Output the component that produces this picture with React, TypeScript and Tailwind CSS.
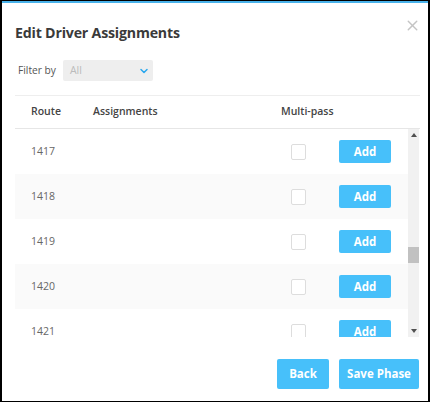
import { ChevronDown, X } from 'lucide-react'

const routes = ['1417', '1418', '1419', '1420', '1421']

export default function App() {
	return (
		<div className="w-[430px] h-[402px] bg-white border border-black border-l-2 border-r-2 flex flex-col font-['Open_Sans',sans-serif] text-[#444]">
			<div className="h-[2px] bg-[#49b2ea]" />

			{/* Header */}
			<div className="relative px-[13px] pt-[19px]">
				<h1 className="text-[14.2px] leading-[22px] font-bold text-[#3a3a3a] tracking-[-0.2px]">
					Edit Driver Assignments
				</h1>
				<X
					className="absolute right-[7px] top-[14px] text-[#c4c4c4]"
					size={17}
					strokeWidth={2}
				/>
			</div>

			{/* Filter */}
			<div className="flex items-center gap-[7px] px-[16px] mt-[16px]">
				<span className="text-[10.2px] text-[#555]">Filter by</span>
				<div className="w-[90px] h-[21px] bg-[#eeeeee] rounded-[2px] flex items-center justify-between pl-[7px] pr-[3px]">
					<span className="text-[10.5px] text-[#bbbbbb]">All</span>
					<ChevronDown size={12} strokeWidth={3} className="text-[#2aa7ee]" />
				</div>
			</div>

			{/* Table */}
			<div className="ml-[13px] mr-[8px] mt-[14px] border-t border-[#eeeeee]">
				<div className="flex items-center h-[33px] border-b border-[#e6e6e6] text-[10.5px] font-semibold text-[#444]">
					<span className="w-[78px] pl-[16px]">Route</span>
					<span className="w-[188px]">Assignments</span>
					<span>Multi-pass</span>
				</div>
				<div className="flex h-[208px]">
					<div className="flex-1 overflow-hidden">
						{routes.map((r, i) => (
							<div
								key={r}
								className={`flex items-center h-[45px] shrink-0 ${i % 2 === 1 ? 'bg-[#fafafa]' : 'bg-white'}`}
							>
								<span className="w-[276px] pl-[16px] text-[10.5px] text-[#666]">{r}</span>
								<span className="w-[15px] h-[16px] border border-[#dddddd] rounded-[2px] bg-white" />
								<button className="ml-[33px] w-[52px] h-[23px] rounded-[2px] bg-[#47c0fa] text-white text-[11.5px] font-bold">
									Add
								</button>
							</div>
						))}
					</div>
					{/* scrollbar */}
					<div className="w-[11px] bg-[#f1f1f1] flex flex-col items-center py-[4px]">
						<svg width="6" height="4" viewBox="0 0 6 4">
							<path d="M3 0L6 4H0z" fill="#505050" />
						</svg>
						<div className="w-full h-[16px] bg-[#c1c1c1] mt-[110px]" />
						<div className="flex-1" />
						<svg width="6" height="4" viewBox="0 0 6 4">
							<path d="M0 0h6L3 4z" fill="#505050" />
						</svg>
					</div>
					<div className="w-[1px]" />
				</div>
			</div>

			{/* Footer */}
			<div className="flex justify-end gap-[10px] pr-[9px] mt-[22px]">
				<button className="w-[52px] h-[30px] rounded-[2px] bg-[#47c0fa] text-white text-[11.5px] font-bold">
					Back
				</button>
				<button className="w-[80px] h-[30px] rounded-[2px] bg-[#47c0fa] text-white text-[11.5px] font-bold">
					Save Phase
				</button>
			</div>
		</div>
	)
}
